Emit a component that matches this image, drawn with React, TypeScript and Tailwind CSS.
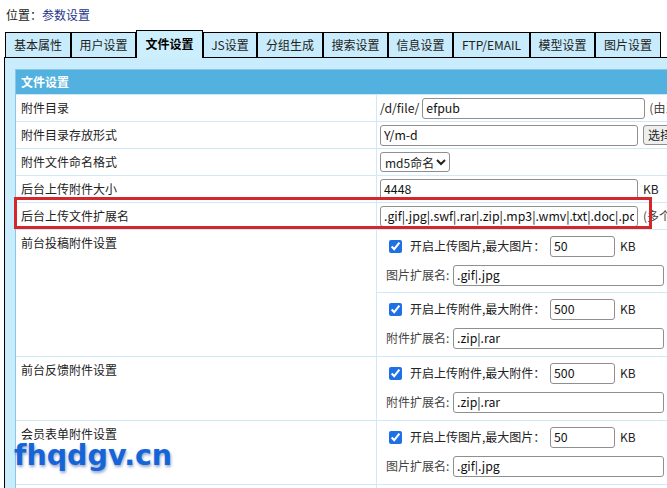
import React from "react";

const tabs = [
  { label: "基本属性", w: "w-[66px]" },
  { label: "用户设置", w: "w-[65px]" },
  { label: "文件设置", w: "w-[67px]", active: true },
  { label: "JS设置", w: "w-[54px]" },
  { label: "分组生成", w: "w-[66px]" },
  { label: "搜索设置", w: "w-[65px]" },
  { label: "信息设置", w: "w-[65px]" },
  { label: "FTP/EMAIL", w: "w-[77px]" },
  { label: "模型设置", w: "w-[65px]" },
  { label: "图片设置", w: "w-[66px]" },
];

function TextBox({ value, className }: { value: string; className: string }) {
  return (
    <input
      readOnly
      defaultValue={value}
      className={`h-[21px] border border-[#8f8f8f] rounded-[3px] bg-white px-[3px] text-[12.3px] text-[#111] outline-none ${className}`}
    />
  );
}

function UploadBlock({
  kind,
  size,
  extLabel,
  ext,
  last,
}: {
  kind: string;
  size: string;
  extLabel: string;
  ext: string;
  last?: boolean;
}) {
  return (
    <div className={`pl-[9px] pt-[6px] pb-[6px] h-[63px] ${last ? "" : "border-b border-[#cfe9f7]"}`}>
      <div className="flex items-center h-[20px]">
        <input
          type="checkbox"
          defaultChecked
          readOnly
          className="w-[13px] h-[13px] ml-[3px] mr-[8px] accent-[#1f6fe5]"
        />
        <span className="text-[12px] text-[#222] w-[140px]">{kind}</span>
        <TextBox value={size} className="w-[65px] h-[20px]" />
        <span className="ml-[5px] text-[12px] text-[#222]">KB</span>
      </div>
      <div className="flex items-center h-[20px] mt-[9px]">
        <span className="text-[12px] text-[#444] w-[67px]">{extLabel}</span>
        <TextBox value={ext} className="w-[211px] h-[20px]" />
      </div>
    </div>
  );
}

function Row({
  label,
  children,
  tall,
}: {
  label: string;
  children: React.ReactNode;
  tall?: boolean;
}) {
  return (
    <div className="flex border-b border-[#cfe9f7]">
      <div
        className={`w-[361px] shrink-0 border-r border-[#cfe9f7] pl-[5px] text-[12px] text-[#222] ${
          tall ? "pt-[4px]" : "h-[26px] flex items-center"
        }`}
      >
        {label}
      </div>
      <div className={`flex-1 ${tall ? "" : "h-[26px] flex items-center pl-[3px]"}`}>{children}</div>
    </div>
  );
}

export default function App() {
  return (
    <div className="relative w-[667px] h-[488px] overflow-hidden bg-white font-['Noto_Sans_CJK_SC','Noto_Sans',sans-serif] text-[12px] text-[#222]">
      {/* breadcrumb */}
      <div className="h-[30px] pl-[6px] pt-[6px] leading-[18px]">
        <span>位置：</span>
        <span className="text-[#23358a]">参数设置</span>
      </div>

      {/* tab strip */}
      <div className="flex items-end h-[27px] pl-[5px]">
        {tabs.map((t) =>
          t.active ? (
            <div
              key={t.label}
              className={`${t.w} relative z-10 h-[28px] -mb-px border border-b-0 border-black bg-[#cdeefc] flex items-center justify-center font-bold text-[12px] text-black pb-[2px]`}
            >
              {t.label}
            </div>
          ) : (
            <div
              key={t.label}
              className={`${t.w} h-[25px] border border-b-0 border-black bg-[#c8ecfb] flex items-center justify-center text-[12px] text-[#222]`}
            >
              {t.label}
            </div>
          )
        )}
      </div>

      {/* tab panel */}
      <div className="ml-[4px] border-t border-l border-black bg-[#c9edfc] pt-[11px] pl-[10px] w-[760px] h-[500px]">
        <div className="w-[740px] border border-[#86c8ea] bg-white">
          <div className="h-[25px] bg-[#52b1de] flex items-center pl-[5px] text-white font-bold text-[12px] border-b border-[#cfe9f7]">
            文件设置
          </div>

          <Row label="附件目录">
            <span className="text-[12.3px] mr-[3px]">/d/file/</span>
            <TextBox value="efpub" className="w-[223px]" />
            <span className="ml-[4px] text-[12px] text-[#444]">(由系统自动生成)</span>
          </Row>

          <Row label="附件目录存放形式">
            <TextBox value="Y/m-d" className="w-[258px]" />
            <button className="ml-[5px] h-[20px] px-[4px] border border-[#8f8f8f] rounded-[3px] bg-[#efefef] text-[12px] leading-[18px]">
              选择
            </button>
          </Row>

          <Row label="附件文件命名格式">
            <select
              defaultValue="md5"
              className="w-[70px] h-[20px] border border-[#8f8f8f] rounded-[3px] bg-white text-[12px] pl-0"
            >
              <option value="md5">md5命名</option>
              <option value="time">时间命名</option>
            </select>
          </Row>

          <Row label="后台上传附件大小">
            <TextBox value="4448" className="w-[258px]" />
            <span className="ml-[5px] text-[12px]">KB</span>
          </Row>

          <Row label="后台上传文件扩展名">
            <TextBox
              value=".gif|.jpg|.swf|.rar|.zip|.mp3|.wmv|.txt|.doc|.pdf"
              className="w-[258px]"
            />
            <span className="ml-[5px] text-[12px] text-[#444]">(多个用|隔开)</span>
          </Row>

          <Row label="前台投稿附件设置" tall>
            <UploadBlock kind="开启上传图片,最大图片：" size="50" extLabel="图片扩展名:" ext=".gif|.jpg" />
            <UploadBlock kind="开启上传附件,最大附件：" size="500" extLabel="附件扩展名:" ext=".zip|.rar" last />
          </Row>

          <Row label="前台反馈附件设置" tall>
            <UploadBlock kind="开启上传附件,最大附件：" size="500" extLabel="附件扩展名:" ext=".zip|.rar" last />
          </Row>

          <Row label="会员表单附件设置" tall>
            <UploadBlock kind="开启上传图片,最大图片：" size="50" extLabel="图片扩展名:" ext=".gif|.jpg" last />
          </Row>

          <Row label="" tall>
            <div className="h-[40px]" />
          </Row>
        </div>
      </div>

      {/* highlight frame around the extension row */}
      <div className="absolute left-[14px] top-[197px] w-[638px] h-[32px] border-[3px] border-[#d4262d] pointer-events-none" />

      {/* site watermark */}
      <div className="absolute left-[14px] top-[439px] font-['DejaVu_Sans',sans-serif] font-bold text-[28.5px] leading-[34px] text-[#1565d8] [text-shadow:1px_2px_3px_rgba(20,60,140,0.45)]">
        fhqdgv.cn
      </div>
    </div>
  );
}
